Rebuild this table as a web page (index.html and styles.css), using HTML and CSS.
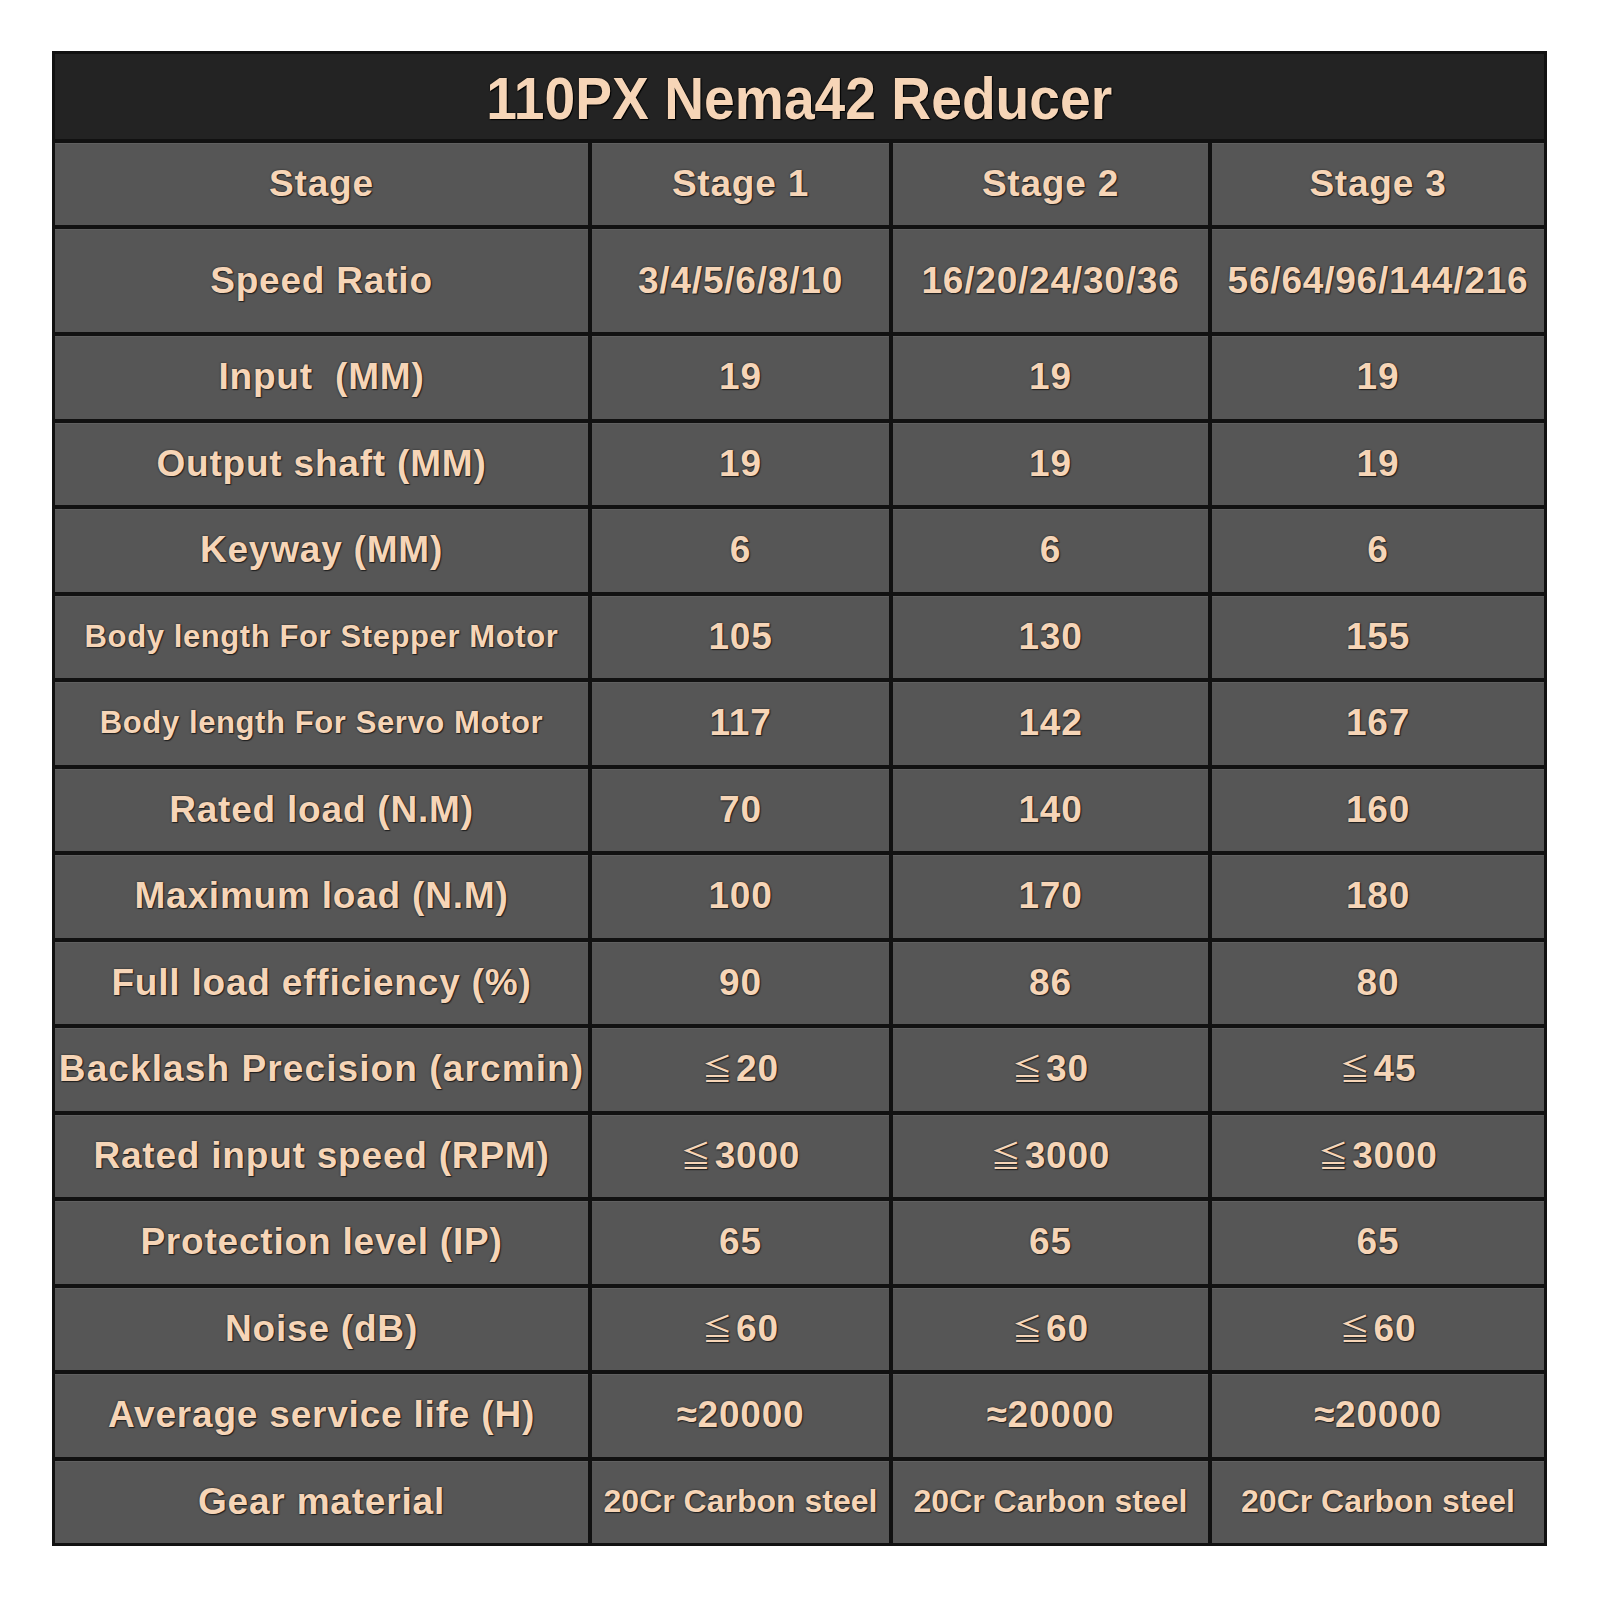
FILE: index.html
```html
<!DOCTYPE html>
<html lang="en">
<head>
<meta charset="utf-8">
<title>110PX Nema42 Reducer</title>
<link rel="stylesheet" href="styles.css">
</head>
<body>
<div class="page">
  <div class="sheet">
    <div class="title"><span class="title-text">110PX Nema42 Reducer</span></div>

    <div class="cell">Stage</div>
    <div class="cell">Stage 1</div>
    <div class="cell">Stage 2</div>
    <div class="cell">Stage 3</div>

    <div class="cell">Speed Ratio</div>
    <div class="cell">3/4/5/6/8/10</div>
    <div class="cell">16/20/24/30/36</div>
    <div class="cell">56/64/96/144/216</div>

    <div class="cell">Input&nbsp; (MM)</div>
    <div class="cell">19</div>
    <div class="cell">19</div>
    <div class="cell">19</div>

    <div class="cell">Output shaft (MM)</div>
    <div class="cell">19</div>
    <div class="cell">19</div>
    <div class="cell">19</div>

    <div class="cell">Keyway (MM)</div>
    <div class="cell">6</div>
    <div class="cell">6</div>
    <div class="cell">6</div>

    <div class="cell small">Body length For Stepper Motor</div>
    <div class="cell">105</div>
    <div class="cell">130</div>
    <div class="cell">155</div>

    <div class="cell small">Body length For Servo Motor</div>
    <div class="cell">117</div>
    <div class="cell">142</div>
    <div class="cell">167</div>

    <div class="cell">Rated load (N.M)</div>
    <div class="cell">70</div>
    <div class="cell">140</div>
    <div class="cell">160</div>

    <div class="cell">Maximum load (N.M)</div>
    <div class="cell">100</div>
    <div class="cell">170</div>
    <div class="cell">180</div>

    <div class="cell">Full load efficiency (%)</div>
    <div class="cell">90</div>
    <div class="cell">86</div>
    <div class="cell">80</div>

    <div class="cell wide">Backlash Precision (arcmin)</div>
    <div class="cell"><span class="le">≦</span>20</div>
    <div class="cell"><span class="le">≦</span>30</div>
    <div class="cell"><span class="le">≦</span>45</div>

    <div class="cell">Rated input speed (RPM)</div>
    <div class="cell"><span class="le">≦</span>3000</div>
    <div class="cell"><span class="le">≦</span>3000</div>
    <div class="cell"><span class="le">≦</span>3000</div>

    <div class="cell">Protection level (IP)</div>
    <div class="cell">65</div>
    <div class="cell">65</div>
    <div class="cell">65</div>

    <div class="cell">Noise (dB)</div>
    <div class="cell"><span class="le">≦</span>60</div>
    <div class="cell"><span class="le">≦</span>60</div>
    <div class="cell"><span class="le">≦</span>60</div>

    <div class="cell">Average service life (H)</div>
    <div class="cell">≈20000</div>
    <div class="cell">≈20000</div>
    <div class="cell">≈20000</div>

    <div class="cell">Gear material</div>
    <div class="cell mat">20Cr Carbon steel</div>
    <div class="cell mat">20Cr Carbon steel</div>
    <div class="cell mat">20Cr Carbon steel</div>
  </div>
</div>
</body>
</html>
```

FILE: styles.css
```css
html, body {
  margin: 0;
  padding: 0;
  background: #ffffff;
}

.page {
  padding: 51px 0 0 52px;
}

.sheet {
  width: 1495px;
  box-sizing: border-box;
  padding: 3px;
  background: #111111;
  display: grid;
  grid-template-columns: 533px 297px 315px 332px;
  grid-template-rows: 85px 82px 103px repeat(14, 82.5px);
  gap: 4px;
  font-family: "Liberation Sans", "Noto Sans CJK SC", sans-serif;
  font-weight: bold;
  color: #f6d5b7;
}

.title {
  grid-column: 1 / -1;
  background: #232323;
  display: flex;
  align-items: center;
  justify-content: center;
  padding-top: 5px;
  box-sizing: border-box;
}

.title-text {
  display: inline-block;
  font-size: 60px;
  line-height: 1;
  transform: scaleX(0.92);
  text-shadow: 0 0 2px #000, 1px 1px 1px #000;
}

.cell {
  background: #565656;
  box-shadow: inset 0 1px 0 #606060;
  display: flex;
  align-items: center;
  justify-content: center;
  font-size: 37px;
  letter-spacing: 0.8px;
  white-space: nowrap;
  text-shadow: 0 0 2px #1c1c1c, 1px 1px 1px #222;
}

.cell.wide {
  letter-spacing: 1.1px;
}

.cell.small {
  font-size: 31px;
  letter-spacing: 0.6px;
}

.cell.mat {
  font-size: 32px;
  letter-spacing: 0;
}

.le {
  font-family: "Noto Sans CJK SC", sans-serif;
  font-weight: normal;
  font-size: 30px;
  margin-right: 3px;
  position: relative;
  top: -2px;
}
```
